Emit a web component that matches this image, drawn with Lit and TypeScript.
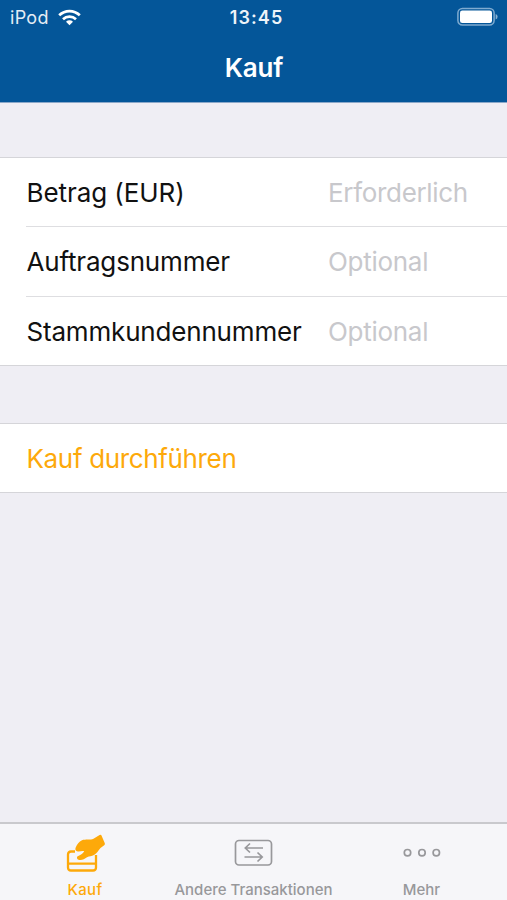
import { LitElement, html, css } from "lit";
import { customElement } from "lit/decorators.js";

@customElement("app-root")
export class AppRoot extends LitElement {
  static styles = css`
    :host {
      display: flex;
      flex-direction: column;
      height: 900px;
      overflow: hidden;
      background: #efeef4;
      color: #111;
      font-family: Inter, "Liberation Sans", sans-serif;
      font-size: 26px;
    }
    svg { display: block; }
    header {
      height: 102px;
      flex: none;
      background: #045699;
      border-bottom: 1px solid #8ba8c9;
      color: #fff;
    }
    .status {
      height: 34px;
      display: grid;
      grid-template-columns: 1fr auto 1fr;
      align-items: center;
      padding: 0 8px 0 10px;
      font-size: 18px;
    }
    .carrier { display: flex; align-items: center; gap: 9px; color: #e4edf5; }
    .name { letter-spacing: 0.3px; }
    .clock { font-weight: 600; font-size: 18px; letter-spacing: 1.1px; padding-left: 4px; color: #eef4f9; }
    .battery { justify-self: end; }
    h1 {
      margin: 0;
      height: 67px;
      line-height: 67px;
      text-align: center;
      font-size: 26px;
      font-weight: 600;
      letter-spacing: -0.2px;
    }
    .title { padding-left: 1px; }
    .group {
      flex: none;
      background: #fff;
      border-top: 1px solid #d5d5d9;
      border-bottom: 1px solid #d5d5d9;
    }
    .fields { margin-top: 54px; }
    .action { margin-top: 57px; }
    .row {
      height: 68px;
      margin-left: 26px;
      display: grid;
      grid-template-columns: 302px 1fr;
      align-items: center;
    }
    .row:nth-child(2) { height: 69px; }
    .row span { padding-left: 0.5px; letter-spacing: -0.18px; }
    .row:first-child span { letter-spacing: -0.08px; }
    .row + .row { border-top: 1px solid #dedee1; }
    .row .hint { color: #c8c8cc; letter-spacing: -0.28px; padding-left: 0; }
    .row:first-child .hint { letter-spacing: -0.32px; }
    .buy { color: #fda90a; }
    .row.buy span { letter-spacing: -0.35px; }
    .tabs {
      margin-top: auto;
      height: 76px;
      flex: none;
      display: grid;
      grid-template-columns: repeat(3, 1fr);
      background: #f6f6f9;
      border-top: 2px solid #c9c9cd;
    }
    .tab {
      display: flex;
      flex-direction: column;
      align-items: center;
      color: #98989b;
      font-size: 15px;
      font-weight: 500;
    }
    .tab svg { height: 57px; overflow: visible; }
    .tab span { line-height: 18px; white-space: nowrap; }
    .more { padding-right: 2px; }
    .tab.active { color: #fda90a; }
    .active span { letter-spacing: 0.4px; padding-left: 1px; }
  `;

  render() {
    return html`
      <header>
        <div class="status">
          <div class="carrier">
            <span class="name">iPod</span>
            <svg width="23" height="17" viewBox="0 0 23 17" fill="none" stroke="#fff" stroke-width="2.7">
              <path d="M1.2 6.3C7 .6 16 .6 21.800 6.300" />
              <path d="M5 10.200C8.700 6.700 14.300 6.700 18 10.200" />
              <path d="M8 12.700C10 10.900 13 10.900 15 12.700L11.500 16.300Z" fill="#fff" stroke="none" />
            </svg>
          </div>
          <span class="clock">13:45</span>
          <svg class="battery" width="42" height="20" viewBox="0 0 42 20">
            <rect x=".9" y="1.500" width="36.200" height="16.500" rx="4.500" fill="none" stroke="#7fabd0" stroke-width="1.500" />
            <rect x="3" y="3.500" width="32" height="12.500" rx="2.300" fill="#fff" />
            <path d="M38.600 7v5.500q2-.7 2-2.750t-2-2.750Z" fill="#8ab2d3" />
          </svg>
        </div>
        <h1><span class="title">Kauf</span></h1>
      </header>

      <section class="group fields">
        <div class="row"><span>Betrag (EUR)</span><span class="hint">Erforderlich</span></div>
        <div class="row"><span>Auftragsnummer</span><span class="hint">Optional</span></div>
        <div class="row"><span>Stammkundennummer</span><span class="hint">Optional</span></div>
      </section>

      <section class="group action">
        <div class="row buy"><span>Kauf durchführen</span></div>
      </section>

      <nav class="tabs">
        <div class="tab active">
          <svg width="40" height="57" viewBox="0 0 40 57">
            <path d="M10 27.500H6Q3 27.500 3 30.500V43.500Q3 46.500 6 46.500H28Q31 46.500 31 43.500V31M3 39.700H31" fill="none" stroke="currentColor" stroke-width="2.300" />
            <path d="M10.700 23.500C12 20.500 14 17.300 17 16.200C20.500 15 25.500 16.300 28.500 14.800L34.600 11Q35.900 10.300 36.500 11.600L39.800 19.300Q40.300 20.500 39.200 21.200L35.500 24C33.500 26.500 32 29 29 31C26.500 32.600 24.500 31.800 22 33.200C19.500 34.800 17 36.600 14 35.900C11.600 35.300 11.300 32.800 13.300 32C16 31 18 29.500 19.200 27.300C16.500 26.500 14.500 28.300 12 27.300Q9.600 26.300 10.700 23.500Z" fill="currentColor" />
          </svg>
          <span>Kauf</span>
        </div>
        <div class="tab">
          <svg width="40" height="57" viewBox="0 0 40 57" fill="none" stroke="currentColor" stroke-width="1.700">
            <rect x="1.500" y="16.500" width="36" height="24.500" rx="3.500" />
            <path d="M29 24H11.500M16 19.500L11.300 24L16 28.500M10.500 33H28M23.500 28.500L28.200 33L23.500 37.500" />
          </svg>
          <span>Andere Transaktionen</span>
        </div>
        <div class="tab more">
          <svg width="40" height="57" viewBox="0 0 40 57" fill="none" stroke="currentColor" stroke-width="1.700">
            <circle cx="5.500" cy="28.700" r="3.200" /><circle cx="20" cy="28.700" r="3.200" /><circle cx="34.300" cy="28.700" r="3.200" />
          </svg>
          <span>Mehr</span>
        </div>
      </nav>
    `;
  }
}
